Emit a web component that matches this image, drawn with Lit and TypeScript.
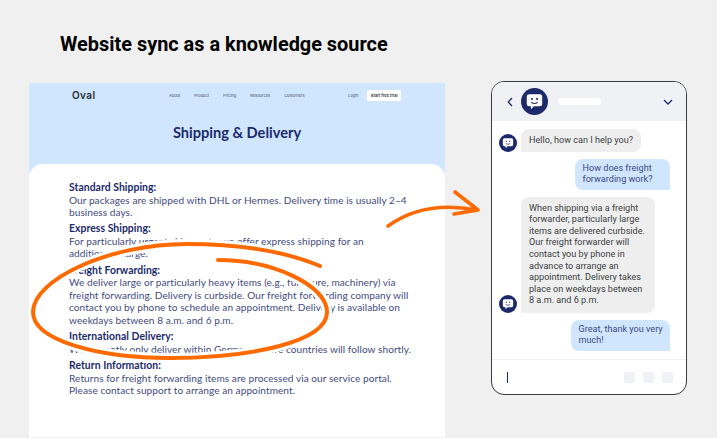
import { LitElement, html, css, svg } from 'lit';
import { customElement, property } from 'lit/decorators.js';

const sections = [
  {
    title: 'Standard Shipping:',
    lines: ['Our packages are shipped with DHL or Hermes. Delivery time is usually 2–4', 'business days.'],
  },
  {
    title: 'Express Shipping:',
    lines: ['For particularly urgent shipments, we offer express shipping for an', 'additional charge.'],
  },
  {
    title: 'Freight Forwarding:',
    lines: [
      'We deliver large or particularly heavy items (e.g., furniture, machinery) via',
      'freight forwarding. Delivery is curbside. Our freight forwarding company will',
      'contact you by phone to schedule an appointment. Delivery is available on',
      'weekdays between 8 a.m. and 6 p.m.',
    ],
  },
  {
    title: 'International Delivery:',
    lines: ['We currently only deliver within Germany. More countries will follow shortly.'],
  },
  {
    title: 'Return Information:',
    lines: ['Returns for freight forwarding items are processed via our service portal.', 'Please contact support to arrange an appointment.'],
  },
];

const navLinks = ['About', 'Product', 'Pricing', 'Resources', 'Customers'];

@customElement('bot-avatar')
export class BotAvatar extends LitElement {
  static styles = css`
    :host {
      display: block;
      flex: none;
    }
    svg {
      display: block;
      width: 100%;
      height: 100%;
    }
  `;

  render() {
    return html`
      <svg viewBox="0 0 28 28">
        <circle cx="14" cy="14" r="14" fill="#1c2a6b"></circle>
        <path d="M8.5 6.5h11a2.5 2.5 0 0 1 2.5 2.5v7.5a2.5 2.5 0 0 1-2.5 2.5h-6l-3.2 3v-3H8.5A2.5 2.5 0 0 1 6 16.5V9a2.5 2.5 0 0 1 2.5-2.5z" fill="#fff"></path>
        <rect x="10.6" y="10" width="1.5" height="2.6" rx=".7" fill="#1c2a6b"></rect>
        <rect x="15.9" y="10" width="1.5" height="2.6" rx=".7" fill="#1c2a6b"></rect>
        <path d="M11 15.1c1.6 1.1 4.4 1.1 6 0" fill="none" stroke="#1c2a6b" stroke-width="1.1" stroke-linecap="round"></path>
      </svg>
    `;
  }
}

@customElement('chat-bubble')
export class ChatBubble extends LitElement {
  static styles = css`
    :host {
      display: block;
    }
    .bubble {
      box-sizing: border-box;
      font-size: 9.1px;
      line-height: 11.6px;
      white-space: nowrap;
    }
    .bot {
      padding: 5.6px 8px;
      background: #eeeeee;
      color: #3c3f44;
      border-radius: 8px 8px 8px 0;
    }
    .user {
      padding: 4px 8px;
      background: #d0e6ff;
      color: #3a4a80;
      border-radius: 8px 8px 0 8px;
    }
  `;

  @property({ type: String })
  from: 'bot' | 'user' = 'bot';

  @property({ type: Number })
  width = 100;

  @property({ type: Array })
  lines: string[] = [];

  render() {
    return html`
      <div class="bubble ${this.from}" style="width: ${this.width}px">
        ${this.lines.map((line) => html`<div>${line}</div>`)}
      </div>
    `;
  }
}

@customElement('app-root')
export class AppRoot extends LitElement {
  static styles = css`
    :host {
      display: block;
      position: relative;
      width: 717px;
      height: 438px;
      overflow: hidden;
      background: #f0f0f0;
      font-family: 'Lato', sans-serif;
    }

    h1 {
      margin: 0;
      padding: 33px 0 0 60px;
      height: 51px;
      box-sizing: border-box;
      font-family: 'Roboto', sans-serif;
      font-size: 19.9px;
      line-height: 24px;
      font-weight: 700;
      color: #000;
    }

    .row {
      display: flex;
      align-items: flex-start;
      padding: 30px 0 0 29px;
      gap: 46px;
    }

    /* Website mockup */
    .site {
      width: 416px;
      height: 354px;
      flex: none;
      background: #d0e6ff;
      display: flex;
      flex-direction: column;
      margin-top: 2px;
    }

    nav {
      display: flex;
      align-items: center;
      height: 24px;
      padding: 0 44px 0 43px;
      font-family: 'Inter', sans-serif;
      font-size: 4px;
      color: #4a4f5c;
    }

    .logo {
      width: 97px;
      font-size: 10px;
      font-weight: 600;
      letter-spacing: 0.4px;
      color: #2b2d33;
    }

    .links {
      display: flex;
      gap: 14px;
    }

    .login {
      margin-left: auto;
      margin-right: 9px;
    }

    .trial {
      background: #fff;
      border-radius: 1.5px;
      padding: 3px 3.5px;
      line-height: 5px;
      font-weight: 600;
      color: #2b2d33;
    }

    .site h2 {
      margin: 0;
      height: 57px;
      padding-top: 15px;
      box-sizing: border-box;
      text-align: center;
      font-size: 14.6px;
      line-height: 22px;
      font-weight: 700;
      color: #1c2a6b;
    }

    .card {
      flex: 1;
      background: #fff;
      border-radius: 14px 14px 0 0;
      padding: 17px 0 0 40px;
      font-size: 10.1px;
      line-height: 12.5px;
      letter-spacing: 0.05px;
      color: #3f4b80;
      white-space: nowrap;
    }

    .card section {
      margin-bottom: 3.9px;
    }

    .card h3 {
      margin: 0;
      font-size: 10.4px;
      line-height: 12.5px;
      font-weight: 700;
      color: #1c2a6b;
    }

    /* Chat phone */
    .phone {
      width: 196px;
      height: 314px;
      flex: none;
      box-sizing: border-box;
      border: 1.5px solid #3a3a3a;
      border-radius: 13px;
      background: #fff;
      overflow: hidden;
      display: flex;
      flex-direction: column;
      font-family: 'Roboto', sans-serif;
    }

    .phone header {
      height: 39px;
      flex: none;
      background: #eff1f5;
      display: flex;
      align-items: center;
      padding: 0 13px 0 14.5px;
    }

    .phone header bot-avatar {
      width: 27px;
      height: 27px;
      margin-left: 8px;
    }

    .name {
      width: 43px;
      height: 7px;
      border-radius: 4px;
      background: #fff;
      margin-left: 10px;
    }

    .down {
      margin-left: auto;
    }

    .messages {
      flex: 1;
      padding: 8px 16.5px 0 7px;
      display: flex;
      flex-direction: column;
      gap: 7px;
    }

    .msg {
      display: flex;
      align-items: flex-end;
      gap: 4px;
    }

    .msg bot-avatar {
      width: 18px;
      height: 18px;
    }

    .msg.user {
      justify-content: flex-end;
    }

    .composer {
      height: 34px;
      flex: none;
      border-top: 1px solid #eff1f5;
      display: flex;
      align-items: center;
      padding: 0 13px 0 14.5px;
      gap: 8px;
    }

    .cursor {
      width: 1px;
      height: 11px;
      background: #1c2a6b;
      margin-right: auto;
    }

    .tool {
      width: 11px;
      height: 11px;
      border-radius: 2.5px;
      background: #eff1f5;
    }

    /* Hand-drawn marks over the page */
    .ink {
      position: absolute;
      inset: 0;
      pointer-events: none;
    }
  `;

  private renderInk() {
    const ring = 'M320 266C282 250 232 244 187 244C108 244 33 280 33 312C33 341 100 358 170 358C250 358 327 342 327 312C327 285 272 260 218 260';
    return svg`
      <path d=${ring} fill="none" stroke="#fff" stroke-width="10"></path>
      <path d=${ring} fill="none" stroke="#ff6a00" stroke-width="4" stroke-linecap="round"></path>
      <path d="M388 226C410 210 440 203 477 210M455 192L478 210L454 214" fill="none" stroke="#ff6a00" stroke-width="3.6" stroke-linecap="round" stroke-linejoin="round"></path>
    `;
  }

  render() {
    return html`
      <h1>Website sync as a knowledge source</h1>
      <div class="row">
        <div class="site">
          <nav>
            <div class="logo">Oval</div>
            <div class="links">${navLinks.map((l) => html`<span>${l}</span>`)}</div>
            <span class="login">Login</span>
            <span class="trial">Start free trial</span>
          </nav>
          <h2>Shipping &amp; Delivery</h2>
          <div class="card">
            ${sections.map(
              (s) => html`
                <section>
                  <h3>${s.title}</h3>
                  ${s.lines.map((line) => html`<div>${line}</div>`)}
                </section>
              `
            )}
          </div>
        </div>

        <div class="phone">
          <header>
            <svg width="6" height="10" viewBox="0 0 6 10"><path d="M5 1L1.2 5L5 9" fill="none" stroke="#1c2a6b" stroke-width="1.3"></path></svg>
            <bot-avatar></bot-avatar>
            <div class="name"></div>
            <svg class="down" width="10" height="6" viewBox="0 0 10 6"><path d="M1 1L5 5L9 1" fill="none" stroke="#1c2a6b" stroke-width="1.3"></path></svg>
          </header>
          <div class="messages">
            <div class="msg">
              <bot-avatar></bot-avatar>
              <chat-bubble from="bot" .width=${120} .lines=${['Hello, how can I help you?']}></chat-bubble>
            </div>
            <div class="msg user">
              <chat-bubble from="user" .width=${95} .lines=${['How does freight', 'forwarding work?']}></chat-bubble>
            </div>
            <div class="msg">
              <bot-avatar></bot-avatar>
              <chat-bubble
                from="bot"
                .width=${134}
                .lines=${[
                  'When shipping via a freight',
                  'forwarder, particularly large',
                  'items are delivered curbside.',
                  'Our freight forwarder will',
                  'contact you by phone in',
                  'advance to arrange an',
                  'appointment. Delivery takes',
                  'place on weekdays between',
                  '8 a.m. and 6 p.m.',
                ]}
              ></chat-bubble>
            </div>
            <div class="msg user">
              <chat-bubble from="user" .width=${99} .lines=${['Great, thank you very', 'much!']}></chat-bubble>
            </div>
          </div>
          <div class="composer">
            <div class="cursor"></div>
            <div class="tool"></div>
            <div class="tool"></div>
            <div class="tool"></div>
          </div>
        </div>
      </div>
      <svg class="ink" width="717" height="438" viewBox="0 0 717 438">${this.renderInk()}</svg>
    `;
  }
}
